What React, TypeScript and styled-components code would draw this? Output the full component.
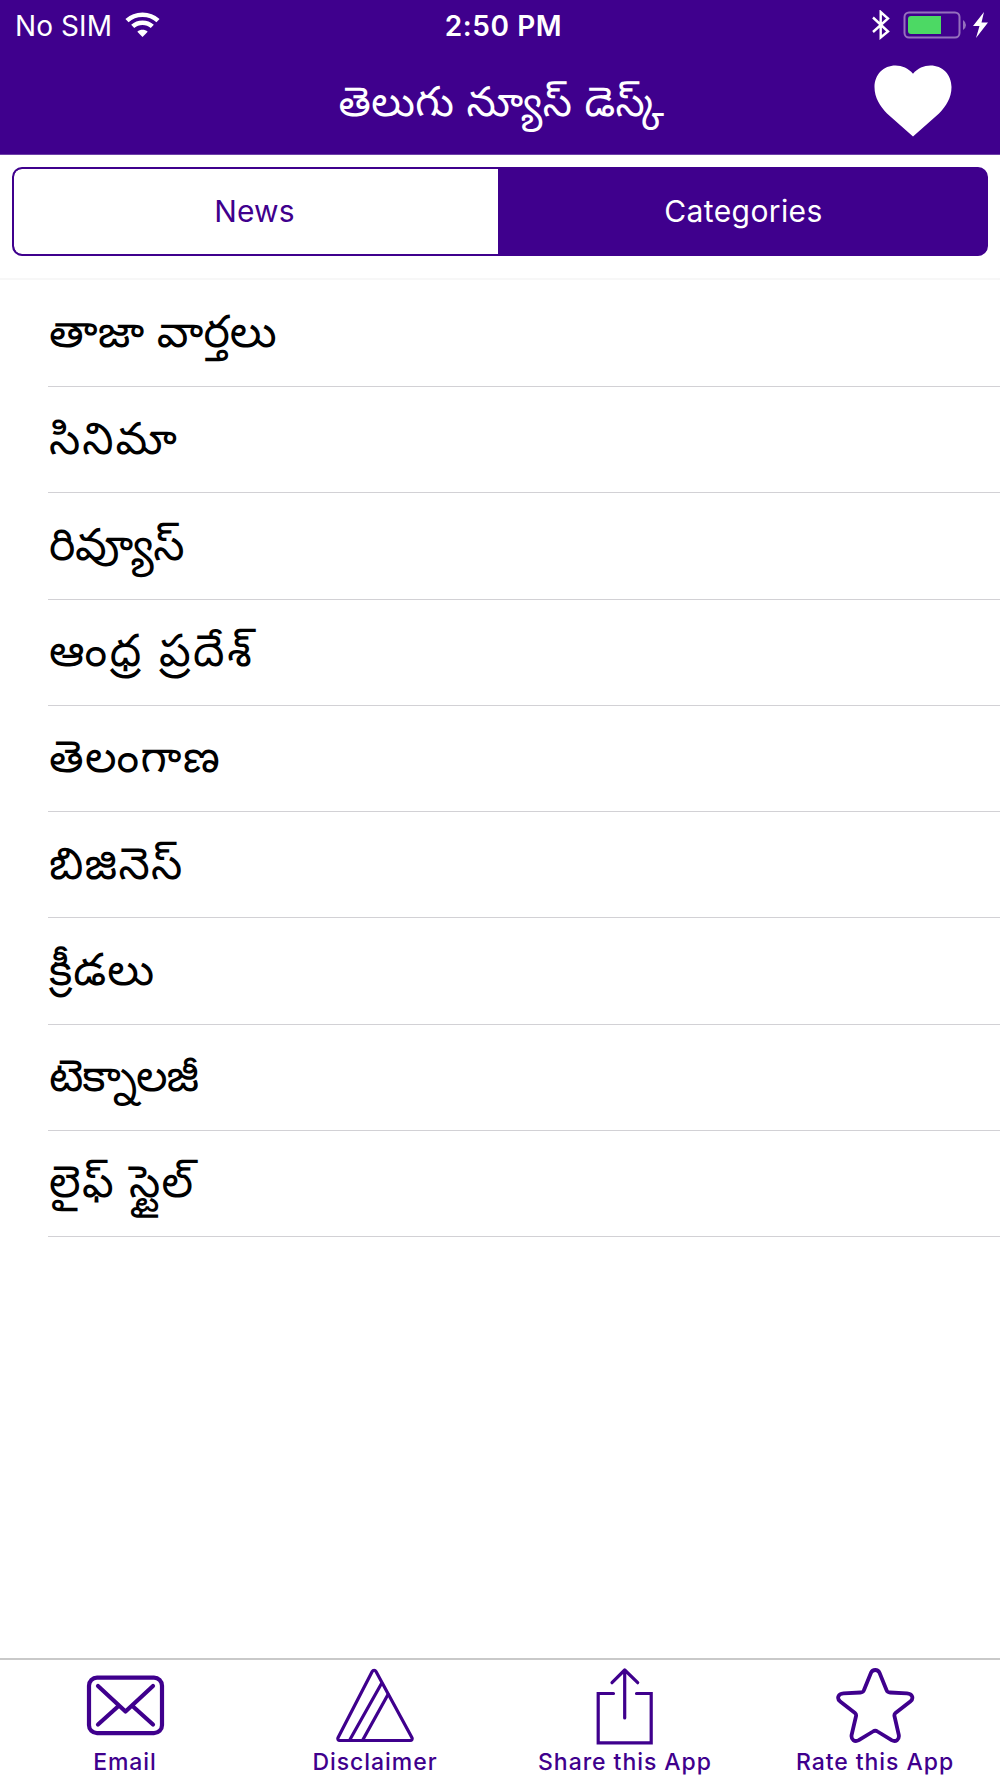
import React from "react";
import styled, { createGlobalStyle } from "styled-components";

const PURPLE = "#3f008d";

const GlobalStyle = createGlobalStyle`
  *, *::before, *::after { box-sizing: border-box; }
  body { margin: 0; background: #fff; font-family: Inter, "Noto Sans Telugu", "Noto Sans", sans-serif; }
  button { margin: 0; padding: 0; border: 0; background: none; font: inherit; color: inherit; }
`;

const Screen = styled.div`
  width: 1000px;
  height: 1778px;
  display: flex;
  flex-direction: column;
  background: #fff;
  overflow: hidden;
`;

const Header = styled.header`
  flex: none;
  height: 155px;
  background: ${PURPLE};
  border-bottom: 1px solid #6e40a8;
  color: #fff;
`;

const StatusBar = styled.div`
  height: 50px;
  display: grid;
  grid-template-columns: 1fr auto 1fr;
  align-items: center;
  padding: 0 12px 0 15px;
`;

const StatusSide = styled.div<{ $end?: boolean }>`
  display: flex;
  align-items: center;
  justify-content: ${(p) => (p.$end ? "flex-end" : "flex-start")};
`;

const Line = styled.span<{ $size: number; $weight?: number; $spacing?: number; $drop?: number }>`
  padding-top: ${(p) => p.$drop ?? 0}px;
  font-size: ${(p) => p.$size}px;
  font-weight: ${(p) => p.$weight ?? 400};
  letter-spacing: ${(p) => p.$spacing ?? 0}px;
  line-height: 1.2;
  white-space: nowrap;
`;

const Clock = styled(Line)`
  padding-left: 4px;
`;

const Icon = styled.svg<{ $gap?: number }>`
  display: block;
  flex: none;
  margin-left: ${(p) => p.$gap ?? 0}px;
`;

const NavBar = styled.div`
  height: 104px;
  display: grid;
  grid-template-columns: 140px 1fr 140px;
  align-items: center;
  justify-items: center;
`;

const Title = styled.h1`
  grid-column: 2;
  margin: 0;
  padding: 12px 0 0 3px;
  font-family: "Noto Sans Telugu", "Noto Sans", sans-serif;
  font-size: 41.5px;
  font-weight: 400;
  letter-spacing: 0.4px;
  line-height: 60px;
  white-space: nowrap;
`;

const HeartButton = styled.button`
  justify-self: start;
  margin: 0 0 2px 14px;
`;

const SegmentArea = styled.div`
  flex: none;
  height: 125px;
  padding: 12px 12px 0;
  border-bottom: 2px solid #f7f7f7;
`;

const Segments = styled.div`
  display: grid;
  grid-template-columns: 484px 1fr;
  height: 89px;
  border: 2px solid ${PURPLE};
  border-radius: 10px;
  background: ${PURPLE};
  overflow: hidden;
`;

const Segment = styled.button<{ $active?: boolean }>`
  display: flex;
  align-items: center;
  justify-content: center;
  padding: ${(p) => (p.$active ? "0 0 1px 3px" : "0 3px 1px 0")};
  border-radius: ${(p) => (p.$active ? "0" : "8px 0 0 8px")};
  color: ${(p) => (p.$active ? "#fff" : PURPLE)};
  background: ${(p) => (p.$active ? PURPLE : "#fff")};
`;

const List = styled.ul`
  flex: 1;
  margin: 0;
  padding: 0.75px 0 0 48px;
  list-style: none;
`;

const Row = styled.li<{ $spacing: number }>`
  height: 106.25px;
  display: flex;
  align-items: center;
  padding: 10px 0 0 1px;
  border-bottom: 1px solid #d2d1d5;
  color: #000;
  font-family: "Noto Sans Telugu", "Noto Sans", sans-serif;
  font-size: 44.5px;
  font-weight: 400;
  letter-spacing: ${(p) => p.$spacing}px;
  line-height: 70px;
  white-space: nowrap;
`;

const TabBar = styled.nav`
  flex: none;
  height: 120px;
  display: grid;
  grid-template-columns: repeat(4, 1fr);
  border-top: 2px solid #c9c9c9;
`;

const Tab = styled.button`
  height: 118px;
  display: flex;
  flex-direction: column;
  align-items: center;
  justify-content: flex-start;
  padding-top: 6px;
  color: ${PURPLE};
`;

const stroke = {
  fill: "none",
  stroke: "currentColor",
  strokeLinecap: "round" as const,
  strokeLinejoin: "round" as const,
};

const MailIcon = () => (
  <Icon width="80" height="80" viewBox="0 0 80 80" {...stroke} strokeWidth="4.2">
    <rect x="4" y="11.700" width="73" height="55.500" rx="8" />
    <path d="M13 20 40.500 45.500 68 20M13 58.500 33 40.500M68 58.500 48 40.500" />
  </Icon>
);

const TriangleIcon = () => (
  <Icon width="80" height="80" viewBox="0 0 80 80" {...stroke} strokeWidth="3.200">
    <path d="M37.200 5.500 3 71.700c-.6 1.400.2 2.800 1.700 2.800h70.600c1.500 0 2.300-1.400 1.700-2.800L41 5.500c-.9-1.700-2.900-1.700-3.800 0Z" />
    <path d="M46.500 17.500 15 73.500M53 28.500 28 73.500" />
  </Icon>
);

const ShareIcon = () => (
  <Icon width="80" height="80" viewBox="0 0 80 80" {...stroke} strokeWidth="3.200">
    <path d="M39.700 52V4M27 16.700 39.700 4l13 12.700" />
    <path d="M28.500 27.500H13.200V76.800h53V27.500H51.500" strokeLinejoin="miter" />
  </Icon>
);

const StarIcon = () => (
  <Icon width="80" height="80" viewBox="0 0 80 80" {...stroke} strokeWidth="3.800">
    <path d="M36 6.700c1.500-3.600 7-3.600 8.500 0l7 17.300c.5 1.500 1.500 2.500 3.500 2.500l17 .8c5.500.3 7 5.200 3.300 8.200L60.500 47c-1 .8-1.300 2-1 3.300l4.300 18.700c.7 4.500-3 7.500-7.200 5.200L42.500 65.500c-1.500-1-3-1-4.500 0l-14.200 8.700c-4.200 2.300-7.900-.7-7.200-5.200L21 50.300c.3-1.300 0-2.500-1-3.300L5.200 35.500c-3.700-3-2.200-7.900 3.300-8.200l17-.8c2 0 3-1 3.500-2.500Z" />
  </Icon>
);

const WifiIcon = () => (
  <Icon $gap={13} width="35" height="26" viewBox="0 0 35 26" fill="none" stroke="#fff" strokeWidth="4.600">
    <path d="M2 8.600C10.500.700 24.500.700 33 8.600M7.700 14.400c5.500-4.900 14.100-4.900 19.600 0" />
    <path d="M17.500 25 12.300 19.700c3-2.500 7.400-2.500 10.400 0Z" fill="#fff" stroke="none" />
  </Icon>
);

const BluetoothIcon = () => (
  <Icon width="18" height="30" viewBox="0 0 18 30" fill="none" stroke="#fff" strokeWidth="2.400">
    <path d="M1 7.500 16 21.500 8.700 27.500V2L16 8.500 1 22" />
  </Icon>
);

const BatteryIcon = () => (
  <Icon $gap={13} width="64" height="28" viewBox="0 0 64 28">
    <rect x="1.500" y="1.500" width="55" height="25" rx="4.500" fill="none" stroke="#9570bd" strokeWidth="2" />
    <path d="M5 8a3 3 0 0 1 3-3H38V23H8a3 3 0 0 1-3-3Z" fill="#4cd964" />
    <path d="M60 9q3 2 3 5t-3 5Z" fill="#9570bd" />
  </Icon>
);

const BoltIcon = () => (
  <Icon $gap={6} width="15" height="26" viewBox="0 0 15 26" fill="#fff">
    <path d="M11 0 0 14h6.500L3 26 15 10.500H8.500Z" />
  </Icon>
);

const HeartIcon = () => (
  <Icon width="78" height="72" viewBox="0 0 78 72" fill="#fff">
    <path d="M39 8.800C34.500 3.200 28 .5 21.500.500 9.500.500.500 9.600.500 22c0 11 5.500 19 12.500 26.500L39 71.500l26-23C72 41 77.500 33 77.500 22 77.500 9.600 68.500.500 56.500.500 50 .5 43.500 3.200 39 8.800Z" />
  </Icon>
);

const categories = [
  { name: "తాజా వార్తలు", spacing: 0 },
  { name: "సినిమా", spacing: 2 },
  { name: "రివ్యూస్", spacing: -0.4 },
  { name: "ఆంధ్ర ప్రదేశ్", spacing: 2.6 },
  { name: "తెలంగాణ", spacing: 1.4 },
  { name: "బిజినెస్", spacing: 1.3 },
  { name: "క్రీడలు", spacing: 1 },
  { name: "టెక్నాలజీ", spacing: -1.1 },
  { name: "లైఫ్ స్టైల్", spacing: 1.4 },
];

const tabs = [
  { label: "Email", Glyph: MailIcon },
  { label: "Disclaimer", Glyph: TriangleIcon },
  { label: "Share this App", Glyph: ShareIcon },
  { label: "Rate this App", Glyph: StarIcon },
];

export default function App() {
  return (
    <>
      <GlobalStyle />
      <Screen>
        <Header>
          <StatusBar>
            <StatusSide>
              <Line $size={28} $spacing={0.1} $drop={3}>No SIM</Line>
              <WifiIcon />
            </StatusSide>
            <Clock $size={28} $weight={600} $spacing={0.6} $drop={3}>2:50 PM</Clock>
            <StatusSide $end>
              <BluetoothIcon />
              <BatteryIcon />
              <BoltIcon />
            </StatusSide>
          </StatusBar>
          <NavBar>
            <Title>తెలుగు న్యూస్ డెస్క్</Title>
            <HeartButton aria-label="Favourites">
              <HeartIcon />
            </HeartButton>
          </NavBar>
        </Header>
        <SegmentArea>
          <Segments>
            <Segment>
              <Line $size={30} $spacing={0.2}>News</Line>
            </Segment>
            <Segment $active>
              <Line $size={30} $spacing={0.4}>Categories</Line>
            </Segment>
          </Segments>
        </SegmentArea>
        <List>
          {categories.map(({ name, spacing }) => (
            <Row key={name} $spacing={spacing}>{name}</Row>
          ))}
        </List>
        <TabBar>
          {tabs.map(({ label, Glyph }) => (
            <Tab key={label}>
              <Glyph />
              <Line $size={23} $weight={500} $spacing={0.95} $drop={3}>{label}</Line>
            </Tab>
          ))}
        </TabBar>
      </Screen>
    </>
  );
}
